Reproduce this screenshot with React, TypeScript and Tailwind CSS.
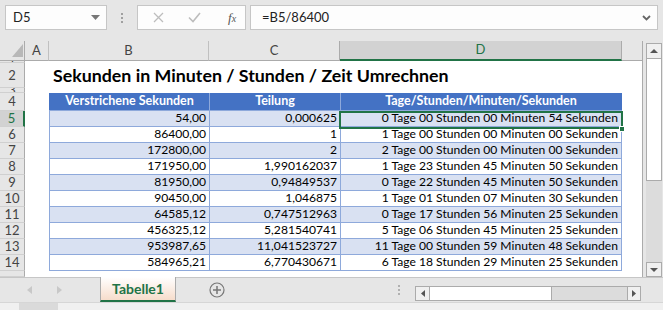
import React from 'react';

const data: [string, string, string][] = [
  ['54,00', '0,000625', '0 Tage 00 Stunden 00 Minuten 54 Sekunden'],
  ['86400,00', '1', '1 Tage 00 Stunden 00 Minuten 00 Sekunden'],
  ['172800,00', '2', '2 Tage 00 Stunden 00 Minuten 00 Sekunden'],
  ['171950,00', '1,990162037', '1 Tage 23 Stunden 45 Minuten 50 Sekunden'],
  ['81950,00', '0,94849537', '0 Tage 22 Stunden 45 Minuten 50 Sekunden'],
  ['90450,00', '1,046875', '1 Tage 01 Stunden 07 Minuten 30 Sekunden'],
  ['64585,12', '0,747512963', '0 Tage 17 Stunden 56 Minuten 25 Sekunden'],
  ['456325,12', '5,281540741', '5 Tage 06 Stunden 45 Minuten 25 Sekunden'],
  ['953987,65', '11,041523727', '11 Tage 00 Stunden 59 Minuten 48 Sekunden'],
  ['584965,21', '6,770430671', '6 Tage 18 Stunden 29 Minuten 25 Sekunden'],
];

function RowHead({ n, h, active }: { n: string; h: string; active?: boolean }) {
  return (
    <div
      className={`${h} w-[25px] shrink-0 flex items-center justify-center overflow-hidden border-b border-[#d0d0d0] text-[13px] leading-none ${
        active
          ? 'bg-[#d2d2d2] text-[#217346] border-r-2 border-r-[#217346]'
          : 'bg-[#e6e6e6] text-[#444] border-r border-r-[#ababab]'
      }`}
    >
      {n}
    </div>
  );
}

export default function App() {
  return (
    <div className="w-[663px] h-[310px] bg-[#e6e6e6] flex flex-col overflow-hidden font-['Lato',sans-serif] text-black">
      {/* Formula bar */}
      <div className="h-[41px] shrink-0 flex items-start pt-[5px] pl-[5px]">
        <div className="w-[102px] h-[25px] bg-[#fdfdfd] border border-[#c6c6c6] flex items-center justify-between pl-[7px] pr-[6px] text-[13px] text-[#222]">
          <span>D5</span>
          <svg width="9" height="5" viewBox="0 0 9 5"><path d="M0 0h9L4.5 5z" fill="#777" /></svg>
        </div>
        <div className="w-[30px] h-[25px] flex flex-col items-center justify-center gap-[2px]">
          <span className="w-[2px] h-[2px] bg-[#a0a0a0]" />
          <span className="w-[2px] h-[2px] bg-[#a0a0a0]" />
          <span className="w-[2px] h-[2px] bg-[#a0a0a0]" />
        </div>
        <div className="w-[109px] h-[25px] bg-[#fdfdfd] border border-[#c6c6c6] flex items-center">
          <svg className="ml-[15px]" width="11" height="11" viewBox="0 0 11 11">
            <path d="M1 1l9 9M10 1l-9 9" stroke="#bdbdbd" strokeWidth="1.3" />
          </svg>
          <svg className="ml-[24px]" width="13" height="11" viewBox="0 0 13 11">
            <path d="M1 5.5l4 4 7-8.5" stroke="#bdbdbd" strokeWidth="1.6" fill="none" />
          </svg>
          <span className="ml-[27px] text-[13px] italic text-[#555] font-['Liberation_Serif',serif]">
            f<span className="text-[10px]">x</span>
          </span>
        </div>
        <div className="ml-[4px] w-[408px] h-[25px] bg-[#fdfdfd] border border-[#c6c6c6] flex items-center justify-between pl-[11px] pr-[6px] text-[13px] text-[#222]">
          <span>=B5/86400</span>
          <svg width="9" height="6" viewBox="0 0 9 6"><path d="M1 1l3.5 3.5L8 1" stroke="#666" strokeWidth="1.8" fill="none" /></svg>
        </div>
      </div>

      {/* Sheet + vertical scroll */}
      <div className="h-[236px] shrink-0 flex">
        <div className="w-[643px] shrink-0 border-r border-[#ababab] flex flex-col bg-white relative">
          {/* Column header */}
          <div className="h-[20px] shrink-0 flex bg-[#e6e6e6] text-[13px] text-[#444]">
            <div className="w-[25px] h-[20px] border-r border-b border-[#ababab] relative">
              <svg className="absolute left-[12px] top-[3px]" width="11" height="13" viewBox="0 0 11 13">
                <path d="M11 0V13H0z" fill="#b8b8b8" />
              </svg>
            </div>
            <div className="w-[24px] h-[20px] border-r border-b border-[#c0c0c0] border-b-[#ababab] flex items-center justify-center">A</div>
            <div className="w-[160px] h-[20px] border-r border-b border-[#c0c0c0] border-b-[#ababab] flex items-center justify-center">B</div>
            <div className="w-[131px] h-[20px] border-r border-b border-[#ababab] flex items-center justify-center">C</div>
            <div className="w-[282px] h-[20px] bg-[#d2d2d2] border-r border-[#ababab] border-b-2 border-b-[#217346] flex items-center justify-center text-[#217346]">D</div>
            <div className="w-[20px] h-[20px] border-b border-[#ababab]" />
          </div>

          {/* Row 1 */}
          <div className="flex h-[2px]">
            <RowHead n="1" h="h-[2px]" />
          </div>
          {/* Row 2 title */}
          <div className="flex h-[25px]">
            <RowHead n="2" h="h-[25px]" />
            <div className="w-[28px]" />
            <div className="flex items-end pb-[3px] text-[17.8px] font-bold whitespace-nowrap leading-none">
              Sekunden in Minuten / Stunden / Zeit Umrechnen
            </div>
          </div>
          {/* Row 3 */}
          <div className="flex h-[5px]">
            <RowHead n="3" h="h-[5px]" />
          </div>
          {/* Row 4 header */}
          <div className="flex h-[18px]">
            <RowHead n="4" h="h-[18px]" />
            <div className="w-[24px]" />
            <div className="flex bg-[#4472c4] text-white font-bold text-[12.5px] border-b border-[#8ea9db]">
              <div className="w-[160px] border-l border-[#4472c4] flex items-center justify-center">Verstrichene Sekunden</div>
              <div className="w-[131px] border-l border-[#8ea9db] flex items-center justify-center">Teilung</div>
              <div className="w-[282px] border-l border-[#8ea9db] border-r border-r-[#4472c4] flex items-center justify-center">Tage/Stunden/Minuten/Sekunden</div>
            </div>
          </div>
          {data.map((r, i) => (
            <div key={i} className="flex h-[16px]">
              <RowHead n={String(i + 5)} h="h-[16px]" active={i === 0} />
              <div className="w-[24px]" />
              <div className={`flex text-[12.1px] leading-none border-b border-[#8ea9db] ${i % 2 === 0 ? 'bg-[#d9e1f2]' : 'bg-white'}`}>
                <div className="w-[160px] border-l border-[#8ea9db] flex items-center justify-end pr-[3px]">{r[0]}</div>
                <div className="w-[131px] border-l border-[#8ea9db] flex items-center justify-end pr-[3px]">{r[1]}</div>
                <div className="w-[282px] border-l border-r border-[#8ea9db] flex items-center justify-end pr-[3px] whitespace-nowrap">{r[2]}</div>
              </div>
            </div>
          ))}
          {/* Row 15 partial */}
          <div className="flex h-[6px]">
            <RowHead n="" h="h-[6px]" />
          </div>

          {/* Active cell overlay */}
          <div className="absolute left-[339px] top-[70px] w-[284px] h-[18px] border-2 border-[#217346]" />
          <div className="absolute left-[619px] top-[85px] w-[6px] h-[6px] bg-[#217346] border border-white" />
        </div>

        {/* Vertical scrollbar */}
        <div className="flex-1 pl-[3px] pr-[1px] pt-[2px] flex flex-col">
          <div className="h-[16px] shrink-0 border border-[#ababab] bg-[#f0f0f0] flex items-center justify-center">
            <svg width="8" height="4" viewBox="0 0 8 4"><path d="M0 4h8L4 0z" fill="#555" /></svg>
          </div>
          <div className="h-[122px] shrink-0 bg-white border-x border-b border-[#ababab]" />
          <div className="flex-1 bg-[#dcdcdc]" />
          <div className="h-[15px] shrink-0 border border-[#ababab] bg-[#f0f0f0] flex items-center justify-center">
            <svg width="8" height="4" viewBox="0 0 8 4"><path d="M0 0h8L4 4z" fill="#555" /></svg>
          </div>
        </div>
      </div>

      {/* Tab bar */}
      <div className="h-[25px] shrink-0 flex items-start border-t border-[#c6c6c6]">
        <div className="w-[100px] h-[24px] flex items-center">
          <svg className="ml-[27px]" width="5" height="8" viewBox="0 0 5 8"><path d="M5 0v8L0 4z" fill="#c8c8c8" /></svg>
          <svg className="ml-[25px]" width="5" height="8" viewBox="0 0 5 8"><path d="M0 0v8l5-4z" fill="#c8c8c8" /></svg>
        </div>
        <div className="w-[76px] h-[25px] -mt-px border-x border-[#ababab] border-b-2 border-b-[#217346] bg-gradient-to-b from-white to-[#f6dccb] flex items-center justify-center text-[14px] font-bold text-[#217346]">
          Tabelle1
        </div>
        <div className="w-[82px] h-[24px] flex items-center justify-center">
          <svg width="16" height="16" viewBox="0 0 16 16">
            <circle cx="8" cy="8" r="7" fill="none" stroke="#777" strokeWidth="1.2" />
            <path d="M8 4v8M4 8h8" stroke="#777" strokeWidth="1.5" />
          </svg>
        </div>
        <div className="w-[157px] h-[24px] flex items-center justify-end pr-[15px]">
          <div className="flex flex-col gap-[2px]">
            <span className="w-[2px] h-[2px] bg-[#b0b0b0]" />
            <span className="w-[2px] h-[2px] bg-[#b0b0b0]" />
            <span className="w-[2px] h-[2px] bg-[#b0b0b0]" />
          </div>
        </div>
        <div className="w-[226px] h-[15px] mt-[8px] flex border border-[#ababab]">
          <div className="w-[14px] bg-[#f0f0f0] border-r border-[#ababab] flex items-center justify-center">
            <svg width="4" height="7" viewBox="0 0 4 7"><path d="M4 0v7L0 3.5z" fill="#555" /></svg>
          </div>
          <div className="w-[122px] bg-white border-r border-[#ababab]" />
          <div className="flex-1 bg-[#dcdcdc]" />
          <div className="w-[13px] bg-[#f0f0f0] border-l border-[#ababab] flex items-center justify-center">
            <svg width="4" height="7" viewBox="0 0 4 7"><path d="M0 0v7l4-3.5z" fill="#555" /></svg>
          </div>
        </div>
      </div>
      {/* status strip */}
      <div className="flex-1 bg-[#f0f0f0] border-t border-[#d6d6d6] flex">
        <div className="ml-[19px] w-[39px] bg-[#dadada]" />
      </div>
    </div>
  );
}
